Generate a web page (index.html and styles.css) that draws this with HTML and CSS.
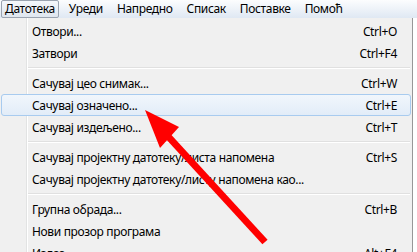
FILE: index.html
```html
<!DOCTYPE html>
<html lang="sr">
<head>
    <meta charset="UTF-8">
    <title>Датотека</title>
    <link rel="stylesheet" href="styles.css">
</head>
<body>
    <div class="menubar">
        <span class="menubar-item active">Датотека</span>
        <span class="menubar-item">Уреди</span>
        <span class="menubar-item">Напредно</span>
        <span class="menubar-item">Списак</span>
        <span class="menubar-item">Поставке</span>
        <span class="menubar-item">Помоћ</span>
    </div>
    <div class="menu">
        <div class="menu-item"><span>Отвори...</span><span class="key">Ctrl+O</span></div>
        <div class="menu-item"><span>Затвори</span><span class="key">Ctrl+F4</span></div>
        <div class="separator"></div>
        <div class="menu-item"><span>Сачувај цео снимак...</span><span class="key">Ctrl+W</span></div>
        <div class="menu-item hover"><span>Сачувај означено...</span><span class="key">Ctrl+E</span></div>
        <div class="menu-item"><span>Сачувај издељено...</span><span class="key">Ctrl+T</span></div>
        <div class="separator"></div>
        <div class="menu-item"><span>Сачувај пројектну датотеку/листа напомена</span><span class="key">Ctrl+S</span></div>
        <div class="menu-item"><span>Сачувај пројектну датотеку/листу напомена као...</span><span class="key"></span></div>
        <div class="separator"></div>
        <div class="menu-item"><span>Групна обрада...</span><span class="key">Ctrl+B</span></div>
        <div class="menu-item"><span>Нови прозор програма</span><span class="key"></span></div>
        <div class="menu-item"><span>Излаз</span><span class="key">Alt+F4</span></div>
    </div>
    <svg class="arrow" width="417" height="252" viewBox="0 0 417 252">
        <line x1="265" y1="242" x2="165" y2="133" stroke="#ff0000" stroke-width="7"/>
        <polygon points="145,110 179,127 160,148" fill="#ff0000"/>
    </svg>
</body>
</html>
```

FILE: styles.css
```css
body {
    margin: 0;
    width: 417px;
    height: 252px;
    overflow: hidden;
    background-color: #ffffff;
    font-family: "Noto Sans", "Liberation Sans", sans-serif;
    font-size: 12px;
    letter-spacing: -0.35px;
    color: #000;
    position: relative;
}
.menubar {
    height: 18px;
    display: flex;
    align-items: center;
    padding-left: 1px;
    background: linear-gradient(#fcfdfe, #dfe8f3);
}
.menubar-item {
    padding: 0 3px;
    margin-right: 6px;
    height: 16px;
    line-height: 16px;
    border: 1px solid transparent;
    border-radius: 2px;
}
.menubar-item.active {
    border-color: #9aa3b0;
    background: linear-gradient(#f4f7fb, #dfe6ef);
}
.menu {
    width: 412px;
    height: 234px;
    padding-top: 2px;
    background-color: #f0f0f0;
    border-right: 1px solid #979797;
    background-image: linear-gradient(to right, transparent 26px, #e2e3e3 26px, #e2e3e3 27px, #ffffff 27px, #ffffff 28px, transparent 28px);
    overflow: hidden;
}
.menu-item {
    height: 22px;
    display: flex;
    align-items: center;
    justify-content: space-between;
    padding: 0 13px 0 30px;
    border: 1px solid transparent;
    box-sizing: border-box;
    margin-left: 1px;
    margin-right: 1px;
}
.menu-item.hover {
    border-color: #a8cbef;
    border-radius: 3px;
    background: linear-gradient(#f1f6fc, #e2ecf8);
}
.separator {
    height: 8px;
    margin-left: 28px;
    margin-right: 2px;
    background: linear-gradient(transparent 3px, #e0e0e0 3px, #e0e0e0 4px, #ffffff 4px, #ffffff 5px, transparent 5px);
}
.arrow {
    position: absolute;
    left: 0;
    top: 0;
}
```
